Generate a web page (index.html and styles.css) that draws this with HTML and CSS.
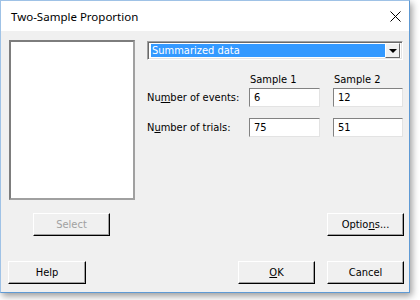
FILE: index.html
```html
<!DOCTYPE html>
<html>
<head>
<meta charset="utf-8">
<link rel="stylesheet" href="styles.css">
</head>
<body>
<div class="window">
  <div class="titlebar">
    <span class="title">Two-Sample Proportion</span>
    <svg class="close" width="11" height="11" viewBox="0 0 11 11"><path d="M0.5 0.5 L10.5 10.5 M10.5 0.5 L0.5 10.5" stroke="#000" stroke-width="1" fill="none"/></svg>
  </div>
  <div class="body">
    <div class="main">
      <div class="listbox"></div>
      <div class="panel">
        <div class="combo">
          <div class="combo-value"><span class="sel">Summarized data</span></div>
          <div class="combo-btn"><span class="tri"></span></div>
        </div>
        <div class="grid">
          <span></span>
          <span class="head">Sample 1</span>
          <span class="head">Sample 2</span>
          <span class="lbl">Nu<u>m</u>ber of events:</span>
          <span class="field">6</span>
          <span class="field">12</span>
          <span class="lbl second">N<u>u</u>mber of trials:</span>
          <span class="field second">75</span>
          <span class="field second">51</span>
        </div>
      </div>
    </div>
    <div class="row2">
      <span class="btn disabled">Select</span>
      <span class="btn">Optio<u>n</u>s...</span>
    </div>
    <div class="row3">
      <span class="btn help">Help</span>
      <div class="right-btns">
        <span class="btn"><u>O</u>K</span>
        <span class="btn">Cancel</span>
      </div>
    </div>
  </div>
</div>
</body>
</html>
```

FILE: styles.css
```css
html, body {
  margin: 0;
  padding: 0;
  background: #ffffff;
}
body {
  width: 420px;
  height: 300px;
  overflow: hidden;
  font-family: "DejaVu Sans Condensed", "DejaVu Sans", sans-serif;
  font-stretch: condensed;
  font-size: 11px;
  color: #000;
}
.window {
  width: 408px;
  height: 291px;
  border: 1px solid #5f9ad4;
  border-top-color: #9fc2e6;
  border-left-color: #9fc2e6;
  box-shadow: 2px 3px 7px rgba(0, 0, 0, 0.4);
  background: #f0f0f0;
  display: flex;
  flex-direction: column;
}
.titlebar {
  height: 30px;
  background: #ffffff;
  display: flex;
  align-items: center;
  justify-content: space-between;
  padding: 0 8px 0 10px;
}
.title {
  font-family: "Noto Sans", sans-serif;
  font-stretch: normal;
  font-size: 11.5px;
  color: #000;
  margin-top: 1px;
}
.close {
  margin-top: 1px;
}
.body {
  flex: 1;
  padding: 9px 5px 0 8px;
  display: flex;
  flex-direction: column;
}
.main {
  display: flex;
  height: 160px;
}
.listbox {
  flex-shrink: 0;
  width: 122px;
  height: 156px;
  background: #ffffff;
  border: 2px solid;
  border-color: #7d7d7d #a0a0a0 #a0a0a0 #7d7d7d;
}
.panel {
  flex-shrink: 0;
  margin-left: 12px;
  padding-top: 1px;
  display: flex;
  flex-direction: column;
}
.combo {
  width: 256px;
  height: 19px;
  box-sizing: border-box;
  border: 1px solid;
  border-color: #a0a0a0 #ffffff #ffffff #a0a0a0;
  box-shadow: inset 1px 1px 0 #696969, inset -1px -1px 0 #e3e3e3;
  background: #ffffff;
  display: flex;
  padding: 2px;
}
.combo-value {
  flex: 1;
  padding-left: 1px;
  display: flex;
}
.sel {
  flex: 1;
  background: #3399ff;
  color: #ffffff;
  line-height: 13px;
  padding-left: 1px;
}
.combo-btn {
  width: 15px;
  height: 15px;
  margin-top: -1px;
  box-sizing: border-box;
  background: #f0f0f0;
  border: 1px solid;
  border-color: #ffffff #696969 #696969 #ffffff;
  display: flex;
  align-items: center;
  justify-content: center;
}
.tri {
  width: 0;
  height: 0;
  border-left: 4px solid transparent;
  border-right: 4px solid transparent;
  border-top: 4px solid #000;
  margin-top: 1px;
}
.grid {
  margin-top: 13px;
  display: grid;
  grid-template-columns: 89px 71px 70px;
  column-gap: 13px;
  grid-template-rows: 15px 19px 30px;
  align-items: center;
}
.head {
  padding-left: 1px;
  align-self: start;
  line-height: 13px;
}
.lbl {
  line-height: 19px;
  white-space: nowrap;
}
.field {
  height: 19px;
  box-sizing: border-box;
  background: #ffffff;
  border: 1px solid;
  border-color: #828282 #e3e3e3 #e3e3e3 #828282;
  padding-left: 4px;
  line-height: 17px;
}
.second {
  margin-top: 11px;
}
.row2 {
  margin-top: 13px;
  display: flex;
  justify-content: space-between;
  padding-left: 24px;
}
.row3 {
  margin-top: 25px;
  margin-left: -1px;
  display: flex;
  justify-content: space-between;
}
.right-btns {
  display: flex;
  gap: 12px;
}
.btn {
  width: 77px;
  height: 23px;
  box-sizing: border-box;
  background: #f0f0f0;
  border: 1px solid;
  border-color: #ffffff #000000 #000000 #ffffff;
  box-shadow: inset -1px -1px 0 #a0a0a0;
  display: flex;
  align-items: center;
  justify-content: center;
  line-height: 13px;
  padding-bottom: 1px;
}
.btn.help {
  width: 78px;
}
.btn.disabled {
  color: #a0a0a0;
}
```
